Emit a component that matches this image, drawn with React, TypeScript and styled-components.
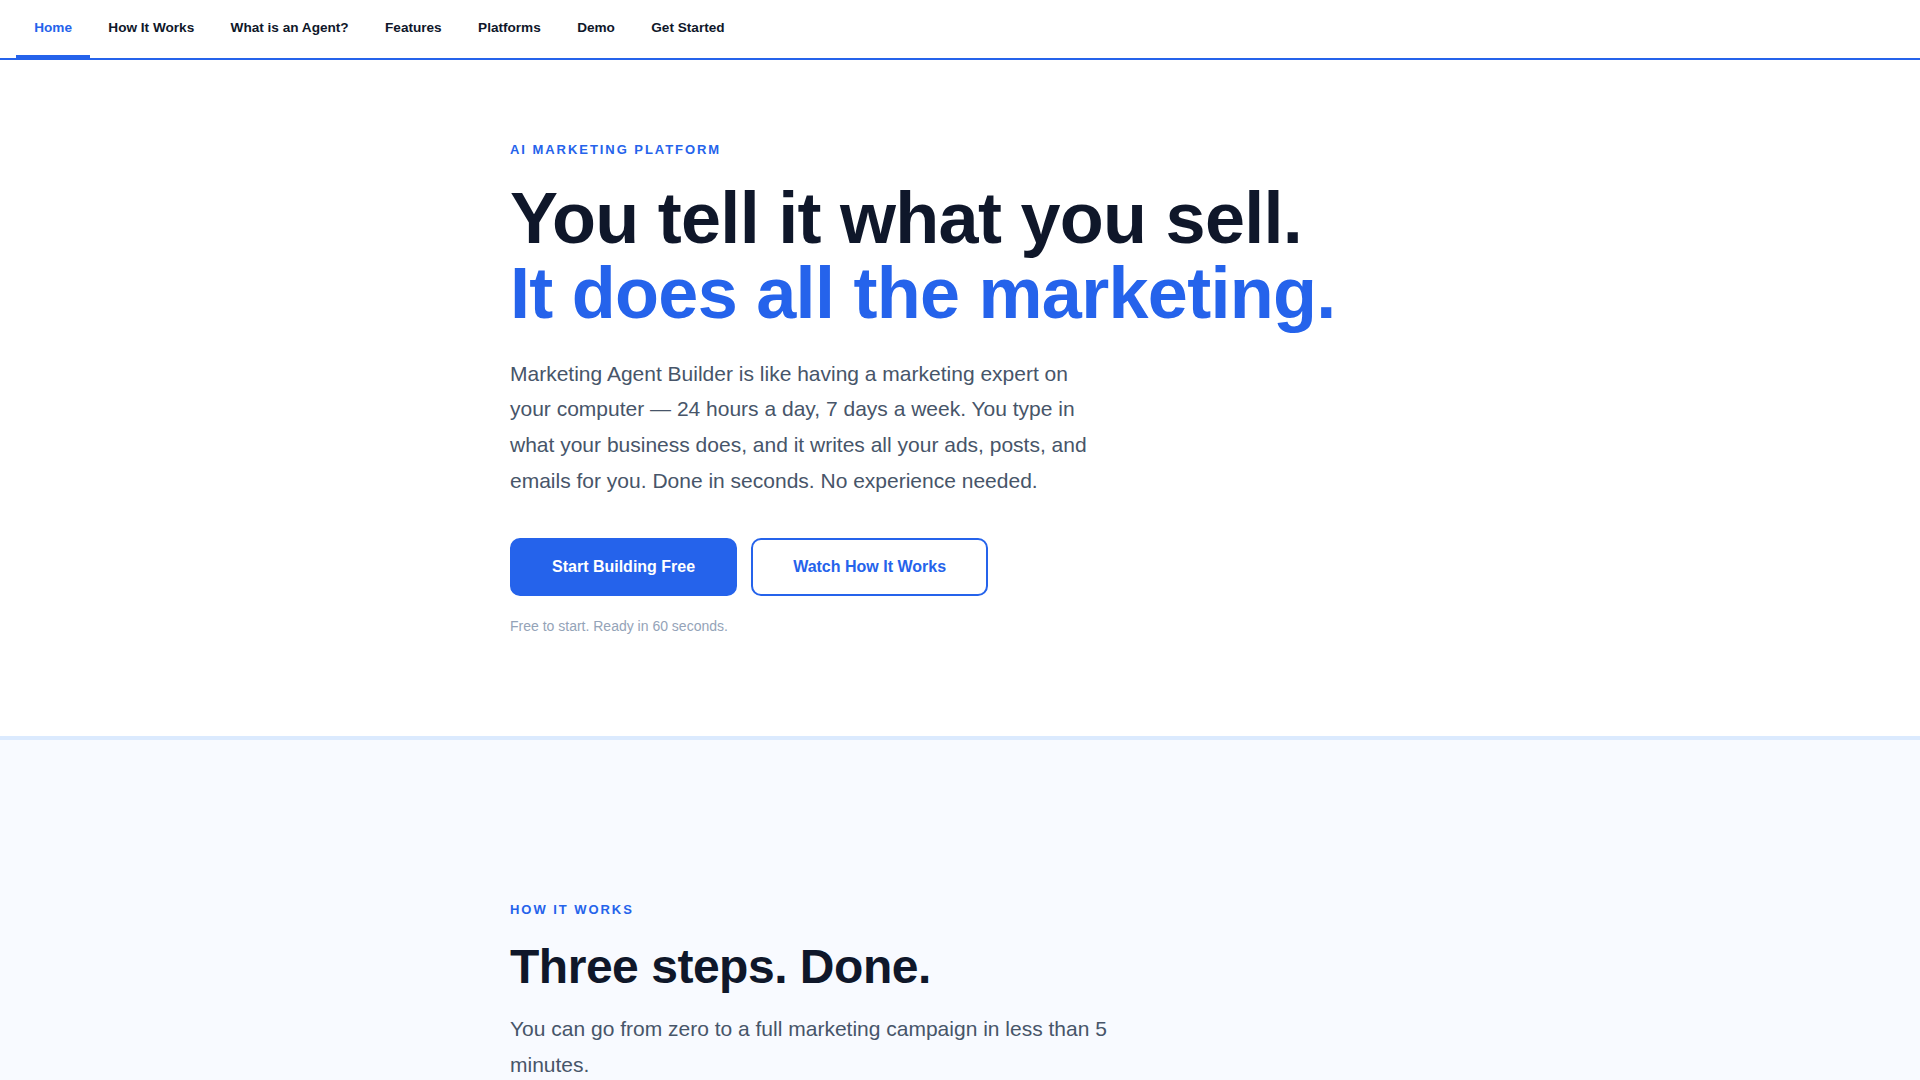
import React from "react";
import styled, { createGlobalStyle } from "styled-components";

const GlobalStyle = createGlobalStyle`
  * { box-sizing: border-box; }
  html, body { margin: 0; padding: 0; background: #ffffff; }
  body {
    font-family: "Liberation Sans", Arial, Helvetica, sans-serif;
    color: #0f172a;
    -webkit-font-smoothing: antialiased;
  }
`;

const Nav = styled.nav`
  display: flex;
  align-items: stretch;
  padding: 0 16px;
  background: #ffffff;
  border-bottom: 2px solid #2563eb;
`;

const Tab = styled.a<{ $active?: boolean }>`
  display: block;
  padding: 19.6px 18.2px 20px;
  font-size: 13.6px;
  font-weight: 700;
  line-height: normal;
  text-decoration: none;
  cursor: pointer;
  color: ${(p) => (p.$active ? "#2563eb" : "#0f172a")};
  border-bottom: 3px solid ${(p) => (p.$active ? "#2563eb" : "transparent")};
`;

const Section = styled.section<{ $tint?: boolean }>`
  background: ${(p) => (p.$tint ? "#f8faff" : "#ffffff")};
  border-top: ${(p) => (p.$tint ? "4px solid #dbeafe" : "none")};
  padding: ${(p) => (p.$tint ? "162px 0 120px" : "82px 0 102px")};
`;

const Container = styled.div`
  max-width: 900px;
  margin: 0 auto;
`;

const Eyebrow = styled.div`
  font-size: 13px;
  font-weight: 700;
  letter-spacing: 0.15em;
  text-transform: uppercase;
  color: #2563eb;
  line-height: normal;
  margin-bottom: 24px;
`;

const Headline = styled.h1`
  margin: 0;
  font-size: 72px;
  font-weight: 700;
  line-height: 1.05;
  letter-spacing: -0.01em;
  color: #0f172a;
`;

const Accent = styled.span`
  display: block;
  color: #2563eb;
`;

const Lead = styled.p<{ $gap?: number }>`
  margin: ${(p) => p.$gap ?? 24}px 0 0;
  max-width: 600px;
  font-size: 21px;
  line-height: 1.7;
  color: #475569;
`;

const Actions = styled.div`
  display: flex;
  gap: 14px;
  margin-top: 39px;
`;

const Button = styled.button<{ $variant: "primary" | "outline" }>`
  font-family: inherit;
  font-size: 16px;
  font-weight: 700;
  line-height: normal;
  padding: 18px 40px;
  border-radius: 10px;
  border: 2px solid #2563eb;
  cursor: pointer;
  background: ${(p) => (p.$variant === "primary" ? "#2563eb" : "#ffffff")};
  color: ${(p) => (p.$variant === "primary" ? "#ffffff" : "#2563eb")};
`;

const Note = styled.p`
  margin: 22px 0 0;
  font-size: 14px;
  line-height: normal;
  color: #94a3b8;
`;

const SectionTitle = styled.h2`
  margin: 0;
  font-size: 48px;
  font-weight: 700;
  line-height: 1.1;
  letter-spacing: -0.01em;
  color: #0f172a;
`;

const navItems = [
  "Home",
  "How It Works",
  "What is an Agent?",
  "Features",
  "Platforms",
  "Demo",
  "Get Started",
];

export default function App() {
  return (
    <>
      <GlobalStyle />
      <Nav>
        {navItems.map((item, i) => (
          <Tab key={item} $active={i === 0}>
            {item}
          </Tab>
        ))}
      </Nav>
      <Section>
        <Container>
          <Eyebrow>AI Marketing Platform</Eyebrow>
          <Headline>
            You tell it what you sell.
            <Accent>It does all the marketing.</Accent>
          </Headline>
          <Lead>
            Marketing Agent Builder is like having a marketing expert on your
            computer — 24 hours a day, 7 days a week. You type in what your
            business does, and it writes all your ads, posts, and emails for
            you. Done in seconds. No experience needed.
          </Lead>
          <Actions>
            <Button $variant="primary">Start Building Free</Button>
            <Button $variant="outline">Watch How It Works</Button>
          </Actions>
          <Note>Free to start. Ready in 60 seconds.</Note>
        </Container>
      </Section>
      <Section $tint>
        <Container>
          <Eyebrow>How It Works</Eyebrow>
          <SectionTitle>Three steps. Done.</SectionTitle>
          <Lead $gap={18}>
            You can go from zero to a full marketing campaign in less than 5
            minutes.
          </Lead>
        </Container>
      </Section>
    </>
  );
}
